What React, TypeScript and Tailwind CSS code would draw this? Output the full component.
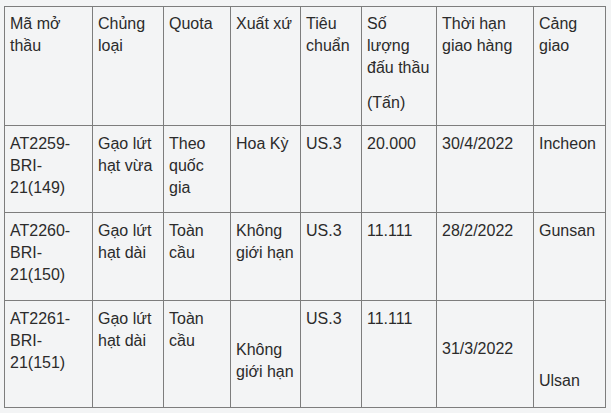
const rows = [
  {
    ma: ["AT2259-", "BRI-", "21(149)"],
    loai: ["Gạo lứt", "hạt vừa"],
    quota: ["Theo", "quốc", "gia"],
    xuatXu: ["Hoa Kỳ"],
    tieuChuan: "US.3",
    soLuong: "20.000",
    thoiHan: "30/4/2022",
    cang: "Incheon",
    h: "h-[87px]",
  },
  {
    ma: ["AT2260-", "BRI-", "21(150)"],
    loai: ["Gạo lứt", "hạt dài"],
    quota: ["Toàn", "cầu"],
    xuatXu: ["Không", "giới hạn"],
    tieuChuan: "US.3",
    soLuong: "11.111",
    thoiHan: "28/2/2022",
    cang: "Gunsan",
    h: "h-[88px]",
  },
];

const Lines = ({ items }: { items: string[] }) => (
  <>
    {items.map((t, i) => (
      <div key={i} className="whitespace-nowrap">
        {t}
      </div>
    ))}
  </>
);

const td = "border border-[#7d7d7d] align-top pl-[5px] pr-[3px] pt-[7px]";
const th = "border border-[#7d7d7d] align-top text-left font-normal pl-[5px] pr-[3px] pt-[6px]";

export default function App() {
  return (
    <div
      className="min-h-screen bg-[#f3f4f5] text-[#2b2b2b] text-[16px] leading-[22px] pt-[6px] pl-[4px]"
      style={{ fontFamily: '"Liberation Sans", Arial, sans-serif' }}
    >
      <table className="table-fixed border-collapse w-[601px]">
        <colgroup>
          <col className="w-[88px]" />
          <col className="w-[71px]" />
          <col className="w-[67px]" />
          <col className="w-[70px]" />
          <col className="w-[61px]" />
          <col className="w-[75px]" />
          <col className="w-[97px]" />
          <col className="w-[72px]" />
        </colgroup>
        <thead>
          <tr className="h-[119px]">
            <th className={th}>
              <Lines items={["Mã mở", "thầu"]} />
            </th>
            <th className={th}>
              <Lines items={["Chủng", "loại"]} />
            </th>
            <th className={th}>Quota</th>
            <th className={th}>
              <Lines items={["Xuất xứ"]} />
            </th>
            <th className={th}>
              <Lines items={["Tiêu", "chuẩn"]} />
            </th>
            <th className={th}>
              <Lines items={["Số", "lượng", "đấu thầu"]} />
              <div className="mt-[13px]">(Tấn)</div>
            </th>
            <th className={th}>
              <Lines items={["Thời hạn", "giao hàng"]} />
            </th>
            <th className={th}>
              <Lines items={["Cảng", "giao"]} />
            </th>
          </tr>
        </thead>
        <tbody>
          {rows.map((r) => (
            <tr key={r.ma[0]} className={r.h}>
              <td className={td}>
                <Lines items={r.ma} />
              </td>
              <td className={td}>
                <Lines items={r.loai} />
              </td>
              <td className={td}>
                <Lines items={r.quota} />
              </td>
              <td className={td}>
                <Lines items={r.xuatXu} />
              </td>
              <td className={td}>{r.tieuChuan}</td>
              <td className={td}>{r.soLuong}</td>
              <td className={td}>{r.thoiHan}</td>
              <td className={td}>{r.cang}</td>
            </tr>
          ))}
          <tr className="h-[107px]">
            <td className={td}>
              <Lines items={["AT2261-", "BRI-", "21(151)"]} />
            </td>
            <td className={td}>
              <Lines items={["Gạo lứt", "hạt dài"]} />
            </td>
            <td className={td}>
              <Lines items={["Toàn", "cầu"]} />
            </td>
            <td className="border border-[#7d7d7d] align-top pl-[5px] pr-[3px] pt-[38px]">
              <Lines items={["Không", "giới hạn"]} />
            </td>
            <td className={td}>US.3</td>
            <td className={td}>11.111</td>
            <td className="border border-[#7d7d7d] align-top pl-[5px] pr-[3px] pt-[37px]">31/3/2022</td>
            <td className="border border-[#7d7d7d] align-top pl-[5px] pr-[3px] pt-[69px]">Ulsan</td>
          </tr>
        </tbody>
      </table>
    </div>
  );
}
